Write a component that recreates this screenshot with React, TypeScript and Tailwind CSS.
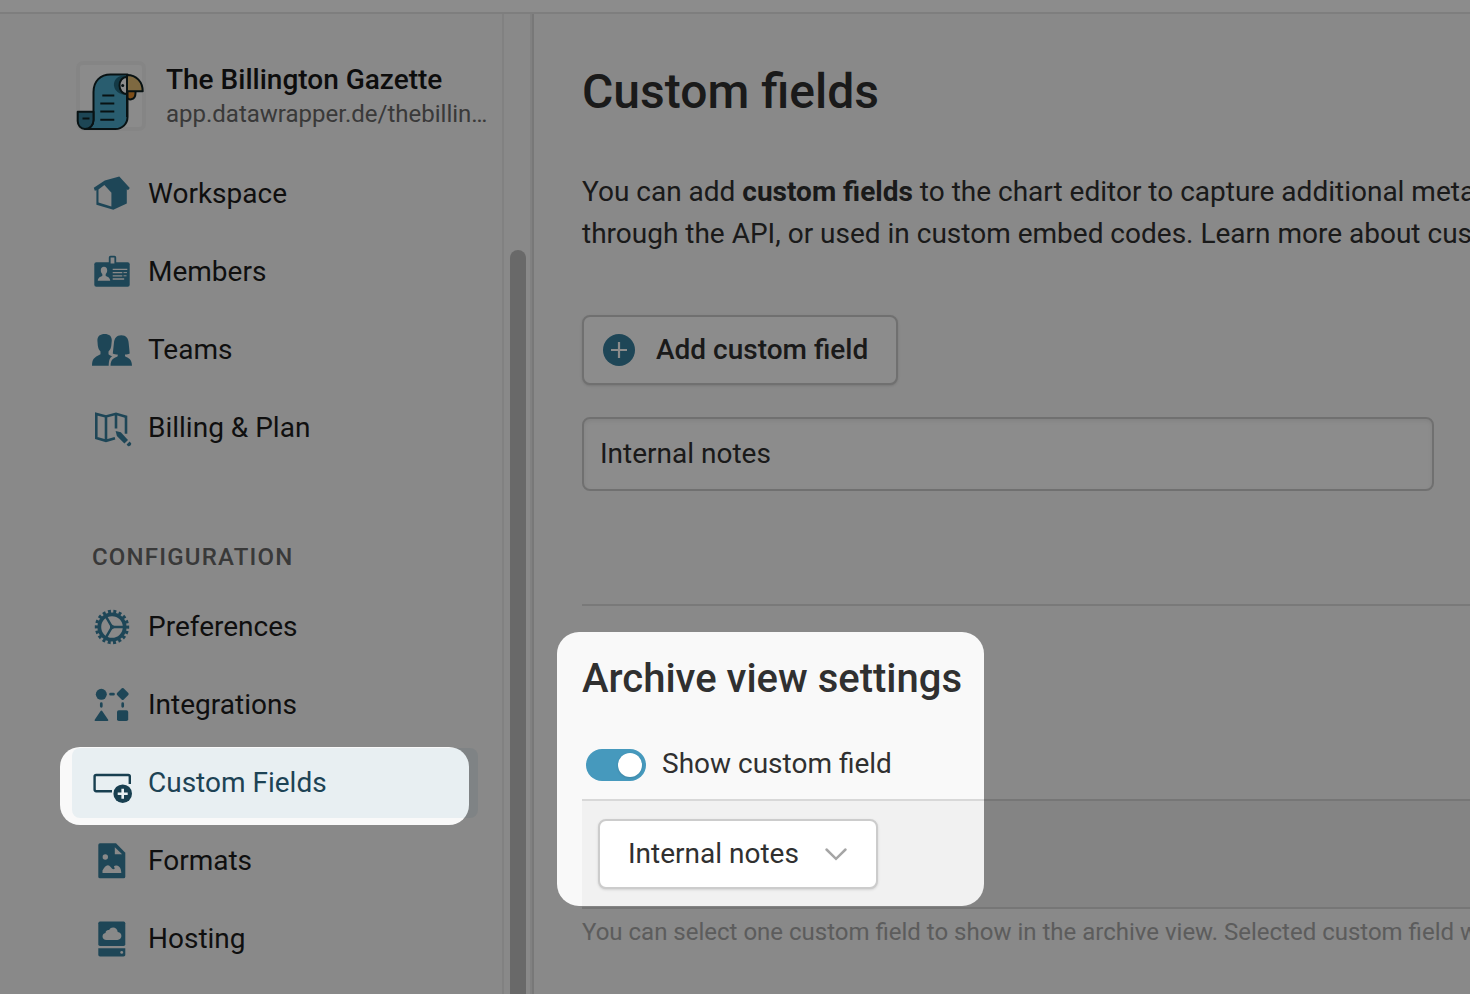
import { useState } from 'react';
import type { ReactNode } from 'react';

const PAPER = '#f9f9f9';

function Icon({ children }: { children: ReactNode }) {
  return (
    <svg viewBox="0 0 40 40" className="size-10 shrink-0" fill="currentColor" aria-hidden="true">
      {children}
    </svg>
  );
}

const WorkspaceIcon = () => (
  <Icon>
    <path d="M1.800 13.800 12.800 6.600l14.500-4.200L37.800 14l-1.800 2.200-1.200-1v14.200l-13.500 6.400-16.900-5V16.200l-1.600.6z" />
    <path d="M6.500 15.400l5.900-4.300 7 7.600v13.800L6.500 28.400z" fill={PAPER} />
  </Icon>
);

const MembersIcon = () => (
  <Icon>
    <rect x="2.3" y="10.2" width="35.4" height="24.6" rx="2" />
    <rect x="17.7" y="4.7" width="5.6" height="7.600" rx="0.8" fill={PAPER} stroke="currentColor" strokeWidth="1.8" />
    <path
      d="M12 14.800c2 0 3.200 1.300 3.200 3.400 0 1.700-.6 2.800-1.500 3.700v2.100c1.600.8 4.300 1.300 4.500 4.700H5.800c.2-3.400 2.900-3.900 4.500-4.700v-2.100c-.9-.9-1.500-2-1.500-3.700 0-2.100 1.200-3.400 3.200-3.400z"
      fill={PAPER}
    />
    <path d="M20.700 17.400h14.600M20.700 20.600h9.600M20.700 23.800h9.600M20.700 27h11.500" stroke={PAPER} strokeWidth="1.300" fill="none" />
    <path d="M31.500 20.600h3.500M31.500 23.800h3" stroke={PAPER} strokeWidth="1" fill="none" />
  </Icon>
);

const TeamsIcon = () => (
  <Icon>
    <path d="M12.700 4c4.400 0 7.200 2.200 7.100 6.400l-.5 5c-.2 2.400-1.300 4.600-2.800 6v2.800c1 1 2.600 1.500 3.800 2.100-2.400 1.200-3.300 3.400-3.600 9.400H0c.2-7.300 1.600-7.700 8.500-11.500v-2.800c-1.500-1.400-2.400-3.600-2.700-6l-.4-5C5.300 6.200 8.300 4 12.700 4z" />
    <path d="M29.300 5.300c4.900 0 7.100 3 7.400 8l1 10.100c-1.200.8-3 1-4.700 1v1.800c3.300 1.900 6.700 2.300 7 9.500H18.500c.3-7.200 3.800-7.600 7.200-9.500v-1.800c-1.800 0-3.700-.2-4.900-1l1.100-10.100c.4-5 2.500-8 7.400-8z" />
  </Icon>
);

const BillingIcon = () => (
  <Icon>
    <path
      d="M23 30.300L14 32.800 4.300 30V6L14 8.500l10-2.700 10 2.900v17.100M14 8.500v24.300M24 5.800v14.700"
      fill="none"
      stroke="currentColor"
      strokeWidth="2.600"
    />
    <path d="M23.600 23l5.200 1.200 7.200 7.700-3.600 3.600-7.500-7.500z" />
    <path d="M34.600 36.600l3-3 1.300 1.300c1.400 1.400-1.600 4.200-3 3z" />
  </Icon>
);

const PreferencesIcon = () => (
  <Icon>
    <g fill="none" stroke="currentColor">
      <circle cx="20" cy="20" r="12.700" strokeWidth="3.800" />
      <circle cx="20" cy="20" r="15.500" strokeWidth="3.400" pathLength="36" strokeDasharray="1.100 0.900" strokeDashoffset="0.500" />
      <path d="M20 20h12M20 20l-6-10.400M20 20l-6 10.400" strokeWidth="2.500" />
    </g>
    <path d="M24 20l-6 3.500v-7z" />
  </Icon>
);

const IntegrationsIcon = () => (
  <Icon>
    <circle cx="9.300" cy="9.300" r="5.500" />
    <path d="M29.800 3.300q.9-.8 1.800 0l4.700 4.800q.8.900 0 1.800l-4.700 4.800q-.9.800-1.800 0L25.100 9.900q-.8-.9 0-1.800z" />
    <path d="M8.600 26q.8-1.200 1.600 0L16.200 34.700q.5 1.200-.8 1.200H3.400q-1.200 0-.7-1.200z" />
    <rect x="25" y="25.300" width="11.200" height="10.700" rx="1.800" />
    <path
      d="M18.500 9.200h3M9.300 18.700v2.600M30.700 18.700v2.600"
      fill="none"
      stroke="currentColor"
      strokeWidth="2.700"
      strokeLinecap="round"
    />
  </Icon>
);

const CustomFieldsIcon = () => (
  <Icon>
    <path
      d="M20 28.200H4.200q-1.600 0-1.600-1.600v-13q0-1.600 1.600-1.600h32q1.600 0 1.600 1.600v7.400"
      fill="none"
      stroke="currentColor"
      strokeWidth="2.400"
    />
    <circle cx="30.700" cy="30.700" r="9.300" />
    <path d="M30.700 25.700v10M25.700 30.700h10" stroke="#e8eff2" strokeWidth="2.600" />
  </Icon>
);

const FormatsIcon = () => (
  <Icon>
    <path d="M8 2.300h16l9.300 9.400v24q0 1.600-1.700 1.600H8q-1.700 0-1.700-1.600V4Q6.300 2.300 8 2.300z" />
    <path d="M22.800 6.200l7.300 7h-7.300z" fill={PAPER} />
    <circle cx="13.300" cy="16" r="2.700" fill={PAPER} />
    <path
      d="M10.500 32v-2.500c1.600-2.800 3.300-5.200 5.400-5.200 2.200 0 3.400 3.600 5.500 4 1.500 0 1.700-1.700.7-2.100-.5-1.200.9-2 2.400-1.700 3.200.7 4.700 3 4.800 7.500z"
      fill={PAPER}
    />
  </Icon>
);

const HostingIcon = () => (
  <Icon>
    <path d="M8 2.500h23.600q1.700 0 1.700 1.700v21q0 1.800-1.700 1.800H8q-1.700 0-1.700-1.800v-21Q6.300 2.500 8 2.500z" />
    <path d="M6.300 29.200h27V36q0 1.400-1.700 1.400H8q-1.700 0-1.700-1.400z" />
    <circle cx="29.700" cy="33.400" r="1.400" fill={PAPER} />
    <path
      d="M14.500 21c-5 0-5.200-6.200-1-6.900.3-3.300 2.700-3.400 3.600-3 2-4.300 8.500-2.900 8.600 2 5.400.6 4.600 7.900-.3 7.900z"
      fill={PAPER}
    />
  </Icon>
);

function Logo() {
  return (
    <svg viewBox="0 0 70 70" className="size-[70px] shrink-0" aria-hidden="true">
      <rect x="2" y="2" width="66" height="66" rx="5" fill="#fdfdfd" stroke="#f3f3f3" strokeWidth="4" />
      <g stroke="#0f2124" strokeWidth="2" strokeLinejoin="round">
        <path d="M51 29h8.500v3c0 8-8.500 7.500-8.500 4z" fill="#e58f2f" />
        <path d="M17.500 31c0-11 7-17.500 17-17.500h17V56c0 7-5.500 12-12 12H9c5 0 8.500-4 8.500-9z" fill="#4caacb" />
        <path d="M1.700 50.700h15.800V59c0 5-3.500 9-8.500 9-4.300 0-7.300-3.500-7.300-8z" fill="#35809b" />
        <path d="M51 14.500c-18-1.500-17 19.500 0 19.500z" fill="#23697f" stroke="none" />
        <path d="M51 16c-10 0-10 17 0 17z" fill="#fff" />
        <path d="M51 14c9.500 0 15.700 7 15.700 16.300H51z" fill="#e6bf77" />
        <path d="M51 14v42" fill="none" />
      </g>
      <circle cx="46.700" cy="24.500" r="1.500" fill="#0f2124" />
      <path
        d="M26.300 34.400h12M24.300 42.500h14M24.300 50.600h14M24.300 58.700h14M6.500 57.400h7"
        fill="none"
        stroke="#0f2124"
        strokeWidth="2"
      />
    </svg>
  );
}

const mainItems = [
  { label: 'Workspace', icon: WorkspaceIcon },
  { label: 'Members', icon: MembersIcon },
  { label: 'Teams', icon: TeamsIcon },
  { label: 'Billing & Plan', icon: BillingIcon },
];

const configItems = [
  { label: 'Preferences', icon: PreferencesIcon },
  { label: 'Integrations', icon: IntegrationsIcon },
  { label: 'Custom Fields', icon: CustomFieldsIcon },
  { label: 'Formats', icon: FormatsIcon },
  { label: 'Hosting', icon: HostingIcon },
];

function NavList({ items, active }: { items: typeof mainItems; active?: string }) {
  return (
    <ul className="flex flex-col gap-2 pl-[72px] pr-6">
      {items.map(({ label, icon: ItemIcon }) => (
        <li key={label}>
          <a
            href="#"
            className={`flex h-[70px] items-center gap-4 rounded-lg px-5 ${label === active ? 'bg-[#e8eff2] text-[#1d4355]' : 'text-[#1d1d1d]'}`}
          >
            <span className={label === active ? 'text-[#183f50]' : 'text-[#38809f]'}>
              <ItemIcon />
            </span>
            {label}
          </a>
        </li>
      ))}
    </ul>
  );
}

// Dark layer above the page, with two rounded windows left clear
function Spotlight() {
  return (
    <svg className="pointer-events-none fixed inset-0 size-full" aria-hidden="true">
      <mask id="spotlight">
        <rect width="100%" height="100%" fill="#fff" />
        <rect x="60" y="747" width="409" height="78" rx="20" fill="#000" />
        <rect x="557" y="632" width="427" height="274" rx="22" fill="#000" />
      </mask>
      <rect width="100%" height="100%" fill="#000" fillOpacity="0.45" mask="url(#spotlight)" />
    </svg>
  );
}

export default function App() {
  const [fieldName, setFieldName] = useState('Internal notes');
  const [showField, setShowField] = useState(true);

  return (
    <div className="flex h-screen flex-col overflow-hidden bg-[#f9f9f9] font-['Roboto',sans-serif] text-[28px] leading-[42px] text-[#303030]">
      <header className="h-3.5 shrink-0 border-b-2 border-[#e6e6e6] bg-white" />

      <div className="flex min-h-0 flex-1">
        <aside className="flex w-[534px] shrink-0 border-r-2 border-[#dadada]">
          <nav className="min-w-0 flex-1 overflow-hidden border-r-2 border-[#ebebeb] pt-[47px]">
            <div className="flex h-[70px] items-center gap-5 pl-[76px]">
              <Logo />
              <div className="min-w-0">
                <p className="truncate font-medium leading-9 text-[#181818]">The Billington Gazette</p>
                <p className="whitespace-nowrap text-2xl leading-8 text-[#696969]">app.datawrapper.de/thebillin…</p>
              </div>
            </div>
            <div className="pt-7">
              <NavList items={mainItems} />
            </div>
            <h2 className="pb-[17px] pl-[92px] pt-[76px] text-2xl font-medium leading-9 tracking-wider text-[#696969]">
              CONFIGURATION
            </h2>
            <NavList items={configItems} active="Custom Fields" />
          </nav>
          <div className="flex w-7 shrink-0 justify-end border-r-2 border-[#ebebeb] pr-1 pt-[236px]">
            <div className="w-4 rounded-t-full bg-[#c0c0c0]" />
          </div>
        </aside>

        <main className="min-w-0 flex-1 overflow-hidden pl-12 pt-12">
          <h1 className="text-5xl font-medium leading-[60px]">Custom fields</h1>
          <p className="mt-[49px] whitespace-nowrap">
            You can add <strong className="font-bold">custom fields</strong> to the chart editor to capture additional metadata
            <br />
            through the API, or used in custom embed codes. Learn more about custom fields
          </p>

          <button
            type="button"
            className="mt-[60px] flex h-[70px] items-center gap-[21px] rounded-lg border-2 border-[#cccccc] bg-white pl-[19px] pr-7 font-medium shadow-sm"
          >
            <svg viewBox="0 0 32 32" className="size-8" aria-hidden="true">
              <circle cx="16" cy="16" r="16" fill="#38809f" />
              <path d="M16 8v16M8 16h16" stroke="#fff" strokeWidth="2.200" />
            </svg>
            Add custom field
          </button>

          <div className="mt-8 pr-9">
            <input
              type="text"
              aria-label="Custom field name"
              value={fieldName}
              onChange={(e) => setFieldName(e.target.value)}
              className="block h-[74px] w-full rounded-lg border-2 border-[#cccccc] bg-white px-4 pb-0.5 shadow-[inset_0_2px_4px_rgba(0,0,0,0.08)] outline-none"
            />
          </div>

          <hr className="mt-[113px] border-t-2 border-[#dddddd]" />

          <h2 className="mt-12 text-[40px] font-medium leading-[50px]">Archive view settings</h2>
          <label className="mt-[39px] flex w-fit items-center gap-4 pl-1">
            <input
              type="checkbox"
              role="switch"
              checked={showField}
              onChange={(e) => setShowField(e.target.checked)}
              className="mt-0.5 flex h-8 w-[60px] appearance-none items-center rounded-full bg-[#bbbbbb] px-1 before:size-6 before:rounded-full before:bg-white before:shadow before:content-[''] checked:justify-end checked:bg-[#4699bd]"
            />
            Show custom field
          </label>

          <div className="mt-3.5 border-y-2 border-[#d8d8d8] bg-[#f1f1f1] px-4 py-[18px]">
            <div className="relative w-fit">
              <select
                aria-label="Custom field"
                className="h-[70px] w-[280px] appearance-none rounded-lg border-2 border-[#cccccc] bg-white pl-7 pr-16 shadow-sm outline-none"
              >
                <option>Internal notes</option>
              </select>
              <svg
                viewBox="0 0 24 24"
                className="pointer-events-none absolute right-[30px] top-[23px] size-6"
                fill="none"
                stroke="#a5a5a5"
                strokeWidth="2.500"
                strokeLinecap="round"
                aria-hidden="true"
              >
                <path d="M2.500 7.500l9.500 9.300 9.500-9.300" />
              </svg>
            </div>
          </div>
          <p className="mt-[7px] whitespace-nowrap text-2xl leading-8 text-[#a8a8a8]">
            You can select one custom field to show in the archive view. Selected custom field will
          </p>
        </main>
      </div>

      <Spotlight />
    </div>
  );
}
